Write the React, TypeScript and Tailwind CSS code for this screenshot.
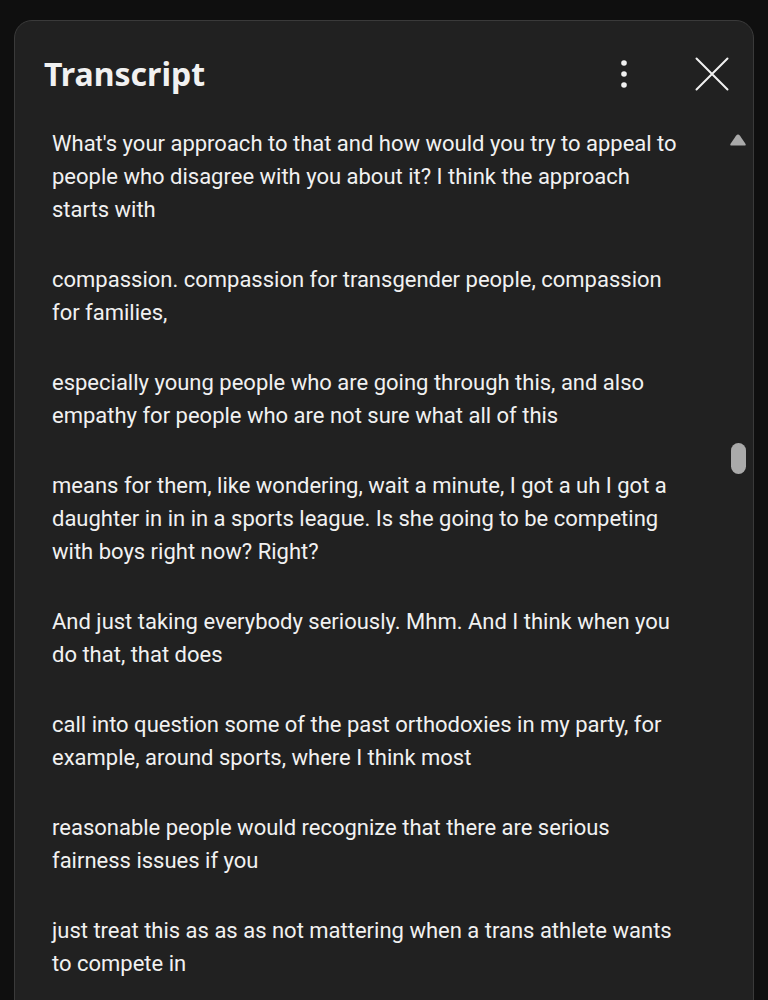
import React from "react";

const paragraphs = [
  "What's your approach to that and how would you try to appeal to people who disagree with you about it? I think the approach starts with",
  "compassion. compassion for transgender people, compassion for families,",
  "especially young people who are going through this, and also empathy for people who are not sure what all of this",
  "means for them, like wondering, wait a minute, I got a uh I got a daughter in in in a sports league. Is she going to be competing with boys right now? Right?",
  "And just taking everybody seriously. Mhm. And I think when you do that, that does",
  "call into question some of the past orthodoxies in my party, for example, around sports, where I think most",
  "reasonable people would recognize that there are serious fairness issues if you",
  "just treat this as as as not mattering when a trans athlete wants to compete in",
];

export default function App() {
  return (
    <div className="min-h-[1000px] h-[1000px] overflow-hidden bg-[#0f0f0f] pt-[20px] pl-[14px]">
      <div className="w-[740px] h-[1100px] rounded-[18px] border border-[#3a3a3a] bg-[#212121]">
        <div className="h-[106px] flex items-center pl-[29px] pr-[24px]">
          <h1
            className="text-[32px] font-bold text-[#f1f1f1] tracking-[0px] leading-none"
            style={{ fontFamily: '"Noto Sans", "Open Sans", sans-serif' }}
          >
            Transcript
          </h1>
          <div className="ml-auto flex items-center">
            <svg width="10" height="30" viewBox="0 0 10 30" className="mr-[66px]">
              <circle cx="5" cy="4" r="2.8" fill="#f1f1f1" />
              <circle cx="5" cy="15" r="2.8" fill="#f1f1f1" />
              <circle cx="5" cy="26" r="2.8" fill="#f1f1f1" />
            </svg>
            <svg width="34" height="34" viewBox="0 0 34 34">
              <path d="M1.5 1.5 L32.5 32.5 M32.5 1.5 L1.5 32.5" stroke="#f1f1f1" strokeWidth="2" strokeLinecap="round" />
            </svg>
          </div>
        </div>
        <div className="flex">
          <div
            className="w-[640px] ml-[37px] flex flex-col gap-[37px] text-[22px] leading-[33px] text-[#f1f1f1]"
            style={{ fontFamily: 'Roboto, "Liberation Sans", sans-serif' }}
          >
            {paragraphs.map((p, i) => (
              <p key={i}>{p}</p>
            ))}
          </div>
          <div className="ml-auto mr-[6px] w-[18px] flex flex-col items-center pt-[6px]">
            <svg width="18" height="14" viewBox="0 0 18 14">
              <path d="M9 1.5 Q10 1.5 11 2.8 L16.6 11 Q17.3 12.5 15.8 12.5 L2.2 12.5 Q0.7 12.5 1.4 11 L7 2.8 Q8 1.5 9 1.5 Z" fill="#aaaaaa" />
            </svg>
            <div className="mt-[296px] w-[15px] h-[31px] rounded-full bg-[#aaaaaa]" />
          </div>
        </div>
      </div>
    </div>
  );
}
